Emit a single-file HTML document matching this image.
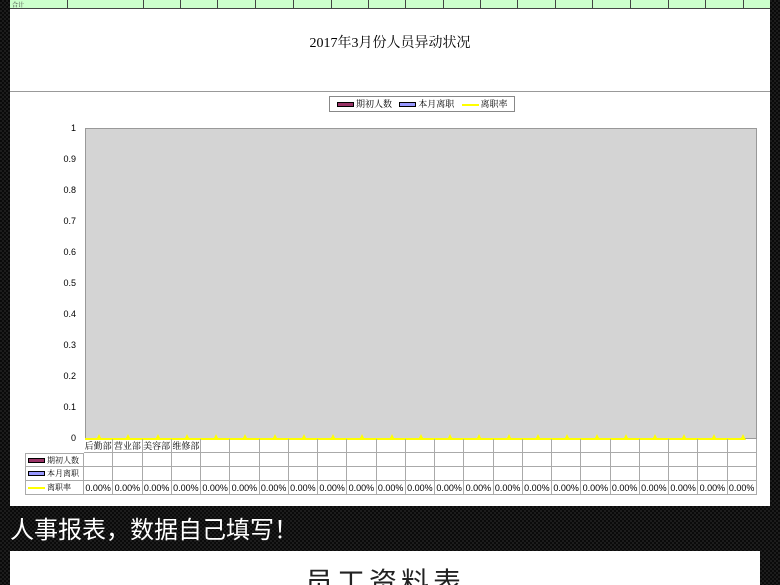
<!DOCTYPE html><html><head><meta charset="utf-8"><style>
*{margin:0;padding:0;box-sizing:border-box}
html{height:585px;overflow:hidden}
body{width:780px;height:585px;overflow:hidden;background:#111 repeating-conic-gradient(#1c1c1c 0 25%,#0a0a0a 0 50%) 0 0/4px 4px;position:relative;font-family:"Liberation Serif","Noto Serif CJK SC",serif}
.a{position:absolute}
#panel{left:10px;top:0;width:760px;height:506px;background:#fff}
#green{left:10px;top:0;width:760px;height:9px;background:#ccffcc;border-bottom:1px solid #444}
.gv{top:0;width:1px;height:9px;background:#444}
#plot{left:85px;top:128px;width:672px;height:311px;background:#d4d4d4;border:1px solid #999}
.yl{left:50px;width:26px;text-align:right;font:9px "Liberation Sans",sans-serif;color:#000}
.row{position:absolute;left:84px;display:flex}
.row div{width:29.26px;flex:none;border-right:1px solid #aaa;border-bottom:1px solid #aaa;font:9px "Liberation Sans",sans-serif;text-align:center;line-height:14px;height:14px;white-space:nowrap;overflow:hidden;color:#000}
.lab{position:absolute;left:25px;width:59px;height:14px;border:1px solid #aaa;border-top:none;font-size:8px;line-height:13px;padding-left:21px;white-space:nowrap;overflow:hidden}
.sw{position:absolute;left:2px;top:4px;width:17px;height:5px;border:1px solid #000}
.tri{position:absolute;top:434px;width:0;height:0;border-left:3px solid transparent;border-right:3px solid transparent;border-bottom:6px solid #ff0}
</style></head><body>
<div class="a" id="panel"></div>
<div class="a" id="green"></div>
<div class="a gv" style="left:67px"></div><div class="a gv" style="left:143px"></div><div class="a gv" style="left:180px"></div><div class="a gv" style="left:217px"></div><div class="a gv" style="left:255px"></div><div class="a gv" style="left:293px"></div><div class="a gv" style="left:331px"></div><div class="a gv" style="left:368px"></div><div class="a gv" style="left:405px"></div><div class="a gv" style="left:443px"></div><div class="a gv" style="left:480px"></div><div class="a gv" style="left:517px"></div><div class="a gv" style="left:555px"></div><div class="a gv" style="left:592px"></div><div class="a gv" style="left:630px"></div><div class="a gv" style="left:668px"></div><div class="a gv" style="left:705px"></div><div class="a gv" style="left:743px"></div>
<div class="a" style="left:12px;top:0;font-size:6px;color:#333">合计</div>
<div class="a" style="left:10px;top:32px;width:760px;text-align:center;font-size:14px;color:#000">2017年3月份人员异动状况</div>
<div class="a" style="left:10px;top:91px;width:760px;height:1px;background:#999"></div>
<div class="a" style="left:329px;top:96px;width:186px;height:16px;border:1px solid #888;font-size:9px;line-height:14px;white-space:nowrap">
<span style="display:inline-block;width:17px;height:5px;background:#993366;border:1px solid #000;margin:0 2px 0 7px;vertical-align:middle"></span>期初人数
<span style="display:inline-block;width:17px;height:5px;background:#9999ff;border:1px solid #000;margin:0 2px 0 5px;vertical-align:middle"></span>本月离职
<span style="display:inline-block;width:17px;height:2px;background:#ff0;margin:0 2px 0 5px;vertical-align:middle"></span>离职率</div>
<div class="a" id="plot"></div>
<div class="a yl" style="top:123px">1</div><div class="a yl" style="top:154px">0.9</div><div class="a yl" style="top:185px">0.8</div><div class="a yl" style="top:216px">0.7</div><div class="a yl" style="top:247px">0.6</div><div class="a yl" style="top:278px">0.5</div><div class="a yl" style="top:309px">0.4</div><div class="a yl" style="top:340px">0.3</div><div class="a yl" style="top:371px">0.2</div><div class="a yl" style="top:402px">0.1</div><div class="a yl" style="top:433px">0</div>
<div class="a" style="left:85px;top:438px;width:660px;height:2px;background:#ff0"></div>
<div class="row" style="top:439px"><div style="font-family:'Liberation Serif','Noto Serif CJK SC',serif">后勤部</div><div style="font-family:'Liberation Serif','Noto Serif CJK SC',serif">营业部</div><div style="font-family:'Liberation Serif','Noto Serif CJK SC',serif">美容部</div><div style="font-family:'Liberation Serif','Noto Serif CJK SC',serif">维修部</div><div></div><div></div><div></div><div></div><div></div><div></div><div></div><div></div><div></div><div></div><div></div><div></div><div></div><div></div><div></div><div></div><div></div><div></div><div></div></div>
<div class="row" style="top:453px"><div></div><div></div><div></div><div></div><div></div><div></div><div></div><div></div><div></div><div></div><div></div><div></div><div></div><div></div><div></div><div></div><div></div><div></div><div></div><div></div><div></div><div></div><div></div></div>
<div class="row" style="top:467px"><div></div><div></div><div></div><div></div><div></div><div></div><div></div><div></div><div></div><div></div><div></div><div></div><div></div><div></div><div></div><div></div><div></div><div></div><div></div><div></div><div></div><div></div><div></div></div>
<div class="row" style="top:481px"><div>0.00%</div><div>0.00%</div><div>0.00%</div><div>0.00%</div><div>0.00%</div><div>0.00%</div><div>0.00%</div><div>0.00%</div><div>0.00%</div><div>0.00%</div><div>0.00%</div><div>0.00%</div><div>0.00%</div><div>0.00%</div><div>0.00%</div><div>0.00%</div><div>0.00%</div><div>0.00%</div><div>0.00%</div><div>0.00%</div><div>0.00%</div><div>0.00%</div><div>0.00%</div></div>
<div class="lab" style="top:453px;border-top:1px solid #aaa"><span class="sw" style="background:#993366"></span>期初人数</div>
<div class="lab" style="top:467px"><span class="sw" style="background:#9999ff"></span>本月离职</div>
<div class="lab" style="top:481px"><span class="sw" style="background:#ff0;border:none;height:2px;top:6px"></span>离职率</div>
<div class="tri" style="left:96px"></div><div class="tri" style="left:125px"></div><div class="tri" style="left:155px"></div><div class="tri" style="left:184px"></div><div class="tri" style="left:213px"></div><div class="tri" style="left:242px"></div><div class="tri" style="left:272px"></div><div class="tri" style="left:301px"></div><div class="tri" style="left:330px"></div><div class="tri" style="left:359px"></div><div class="tri" style="left:389px"></div><div class="tri" style="left:418px"></div><div class="tri" style="left:447px"></div><div class="tri" style="left:476px"></div><div class="tri" style="left:506px"></div><div class="tri" style="left:535px"></div><div class="tri" style="left:564px"></div><div class="tri" style="left:594px"></div><div class="tri" style="left:623px"></div><div class="tri" style="left:652px"></div><div class="tri" style="left:681px"></div><div class="tri" style="left:711px"></div><div class="tri" style="left:740px"></div>
<div class="a" style="left:10px;top:510px;font:24px 'Liberation Sans','Noto Sans CJK SC',sans-serif;color:#fff;white-space:nowrap">人事报表，数据自己填写！</div>
<div class="a" style="left:10px;top:551px;width:750px;height:34px;background:#fff;overflow:hidden"><div style="position:absolute;left:0;top:10px;width:750px;text-align:center;font:28px 'Liberation Sans','Noto Sans CJK SC',sans-serif;color:#222;letter-spacing:4px">员工资料表</div></div>
</body></html>
